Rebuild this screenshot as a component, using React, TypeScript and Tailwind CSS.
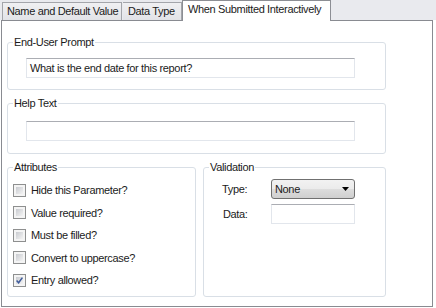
const font = "font-['Liberation_Sans',Arial,sans-serif] text-[11px] tracking-[-0.35px] text-[#1b1b1b]";

function Group({ title, className, children }: { title: string; className?: string; children: React.ReactNode }) {
  return (
    <fieldset className={`border border-[#d9dfe6] rounded-[3px] ${className ?? ''}`}>
      <legend className="ml-[5px] px-[1px] leading-[13px]">{title}</legend>
      {children}
    </fieldset>
  );
}

function TextBox({ value, className }: { value?: string; className?: string }) {
  return (
    <div
      className={`h-[20px] border border-[#e2e6ec] border-t-[#abadb3] bg-white pl-[3px] leading-[18px] ${className ?? ''}`}
    >
      {value}
    </div>
  );
}

function CheckBox({ label, checked }: { label: string; checked?: boolean }) {
  return (
    <div className="flex items-center h-[22.5px]">
      <div className="w-[13px] h-[13px] ml-[5px] border border-[#8e8f8f] bg-[#f4f4f4] p-[2px]">
        <div className="relative w-full h-full bg-gradient-to-br from-[#c9cbd0] to-[#f3f3f3]">
          {checked && (
            <svg viewBox="0 0 7 7" className="absolute inset-0 w-full h-full">
              <path d="M0.6 3.6 L2.6 5.8 L6.4 0.6" fill="none" stroke="#3f5b9a" strokeWidth="1.5" />
            </svg>
          )}
        </div>
      </div>
      <span className="ml-[5px]">{label}</span>
    </div>
  );
}

export default function App() {
  return (
    <div className={`w-[436px] h-[308px] bg-white ${font}`}>
      <div className="flex items-end h-[20px] bg-[#e9eaee] pl-[2px]">
        <div className="h-[18px] w-[120px] border border-b-0 border-[#a3a5aa] bg-gradient-to-b from-[#f0f0f2] to-[#e2e3e7] pl-[4px] leading-[17px]">
          Name and Default Value
        </div>
        <div className="h-[18px] w-[59px] ml-[1px] border border-b-0 border-l-0 border-[#a3a5aa] bg-gradient-to-b from-[#f0f0f2] to-[#e2e3e7] pl-[5px] leading-[17px]">
          Data Type
        </div>
        <div className="relative top-[1px] h-[21px] w-[149px] border border-b-0 border-[#8c8e94] bg-white pl-[5px] leading-[17px]">
          When Submitted Interactively
        </div>
      </div>
      <div className="ml-[1px] w-[432px] h-[287px] border border-[#898b91] bg-white pl-[5px] pt-[15px] flex flex-col gap-[7px]">
        <Group title="End-User Prompt" className="w-[379px]">
          <div className="pl-[18px] pt-[9px] pb-[11px]">
            <TextBox value="What is the end date for this report?" className="w-[329px]" />
          </div>
        </Group>
        <Group title="Help Text" className="w-[379px]">
          <div className="pl-[18px] pt-[11px] pb-[12px]">
            <TextBox className="w-[329px]" />
          </div>
        </Group>
        <div className="flex gap-[7px]">
          <Group title="Attributes" className="w-[189px] h-[136px]">
            <div className="pt-[5px]">
              <CheckBox label="Hide this Parameter?" />
              <CheckBox label="Value required?" />
              <CheckBox label="Must be filled?" />
              <CheckBox label="Convert to uppercase?" />
              <CheckBox label="Entry allowed?" checked />
            </div>
          </Group>
          <Group title="Validation" className="w-[183px] h-[136px]">
            <div className="grid grid-cols-[49px_84px] gap-y-[5px] pl-[18px] pt-[5px] items-center">
              <span>Type:</span>
              <div className="h-[20px] flex items-center justify-between border border-[#707070] rounded-[3px] bg-[linear-gradient(#f2f2f2_0%,#ebebeb_50%,#dddddd_51%,#cfcfcf_100%)] pl-[3px] pr-[5px]">
                <span>None</span>
                <svg viewBox="0 0 7 4" className="w-[7px] h-[4px]">
                  <path d="M0 0 H7 L3.5 4 Z" fill="#000" />
                </svg>
              </div>
              <span className="pl-[1px]">Data:</span>
              <TextBox />
            </div>
          </Group>
        </div>
      </div>
    </div>
  );
}
